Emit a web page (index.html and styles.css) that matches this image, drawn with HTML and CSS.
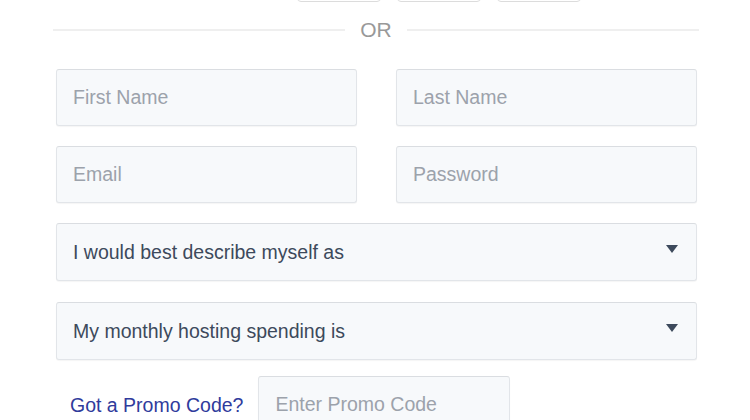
FILE: index.html
```html
<!DOCTYPE html>
<html lang="en">
<head>
    <meta charset="UTF-8">
    <meta name="viewport" content="width=device-width, initial-scale=1.0">
    <title>Sign up</title>
    <link rel="stylesheet" href="styles.css">
</head>
<body>
    <div class="signup">
        <div class="social">
            <button class="social-btn"></button>
            <button class="social-btn"></button>
            <button class="social-btn"></button>
        </div>
        <div class="divider"><span>OR</span></div>
        <form class="form">
            <div class="row">
                <input class="field" type="text" placeholder="First Name">
                <input class="field" type="text" placeholder="Last Name">
            </div>
            <div class="row">
                <input class="field" type="email" placeholder="Email">
                <input class="field" type="password" placeholder="Password">
            </div>
            <div class="select">
                <span>I would best describe myself as</span>
                <i class="caret"></i>
            </div>
            <div class="select">
                <span>My monthly hosting spending is</span>
                <i class="caret"></i>
            </div>
            <div class="promo">
                <a class="promo-link" href="#">Got a Promo Code?</a>
                <input class="field promo-field" type="text" placeholder="Enter Promo Code">
            </div>
        </form>
    </div>
</body>
</html>
```

FILE: styles.css
```css
body{
    margin: 0;
    background: #fff;
    font-family: "Liberation Sans", Arial, sans-serif;
}

.signup{
    width: 646px;
    margin-left: 53px;
}

/* 위쪽 소셜 버튼 - 화면 위로 잘려서 보임 */
.social{
    display: flex;
    gap: 16px;
    margin-top: -40px;
    padding-left: 244px;
}
.social-btn{
    width: 84px;
    height: 42px;
    border: 1px solid #dcdcdc;
    border-radius: 4px;
    background: #fff;
}

.divider{
    display: flex;
    align-items: center;
    gap: 15px;
    margin-top: 16px;
    color: #999;
    font-size: 21px;
    line-height: 24px;
}
.divider::before,
.divider::after{
    content: "";
    flex: 1;
    height: 2px;
    background: #efefef;
}

.form{
    margin: 27px 2px 0 3px;
    display: flex;
    flex-direction: column;
    gap: 20px;
}
.row{
    display: flex;
    gap: 39px;
}

.field,
.select{
    box-sizing: border-box;
    height: 57px;
    border: 1px solid #e2e5e9;
    border-top-color: #dadde1;
    border-radius: 3px;
    background: #f7f9fb;
    box-shadow: 0 1px 1px rgba(0,0,0,0.04);
    font-family: inherit;
    font-size: 19.5px;
    color: #3d4a5c;
    padding: 0 16px;
}
.row .field{
    flex: 1;
    width: 0;
}
.field::placeholder{
    color: #9ca2ab;
}

.select{
    display: flex;
    align-items: center;
    justify-content: space-between;
    height: 58px;
    padding-right: 18px;
}
.select + .select{
    margin-top: 1px;
}
.caret{
    width: 0;
    height: 0;
    border-left: 6px solid transparent;
    border-right: 6px solid transparent;
    border-top: 8px solid #3d4a5c;
    margin-top: -6px;
}

.promo{
    display: flex;
    align-items: flex-start;
    gap: 15px;
    margin-top: -4px;
}
.promo-link{
    color: #2f3b9c;
    font-size: 19.5px;
    text-decoration: none;
    margin-left: 14px;
    margin-top: 18px;
}
.promo-field{
    width: 252px;
    height: 57px;
}
```
